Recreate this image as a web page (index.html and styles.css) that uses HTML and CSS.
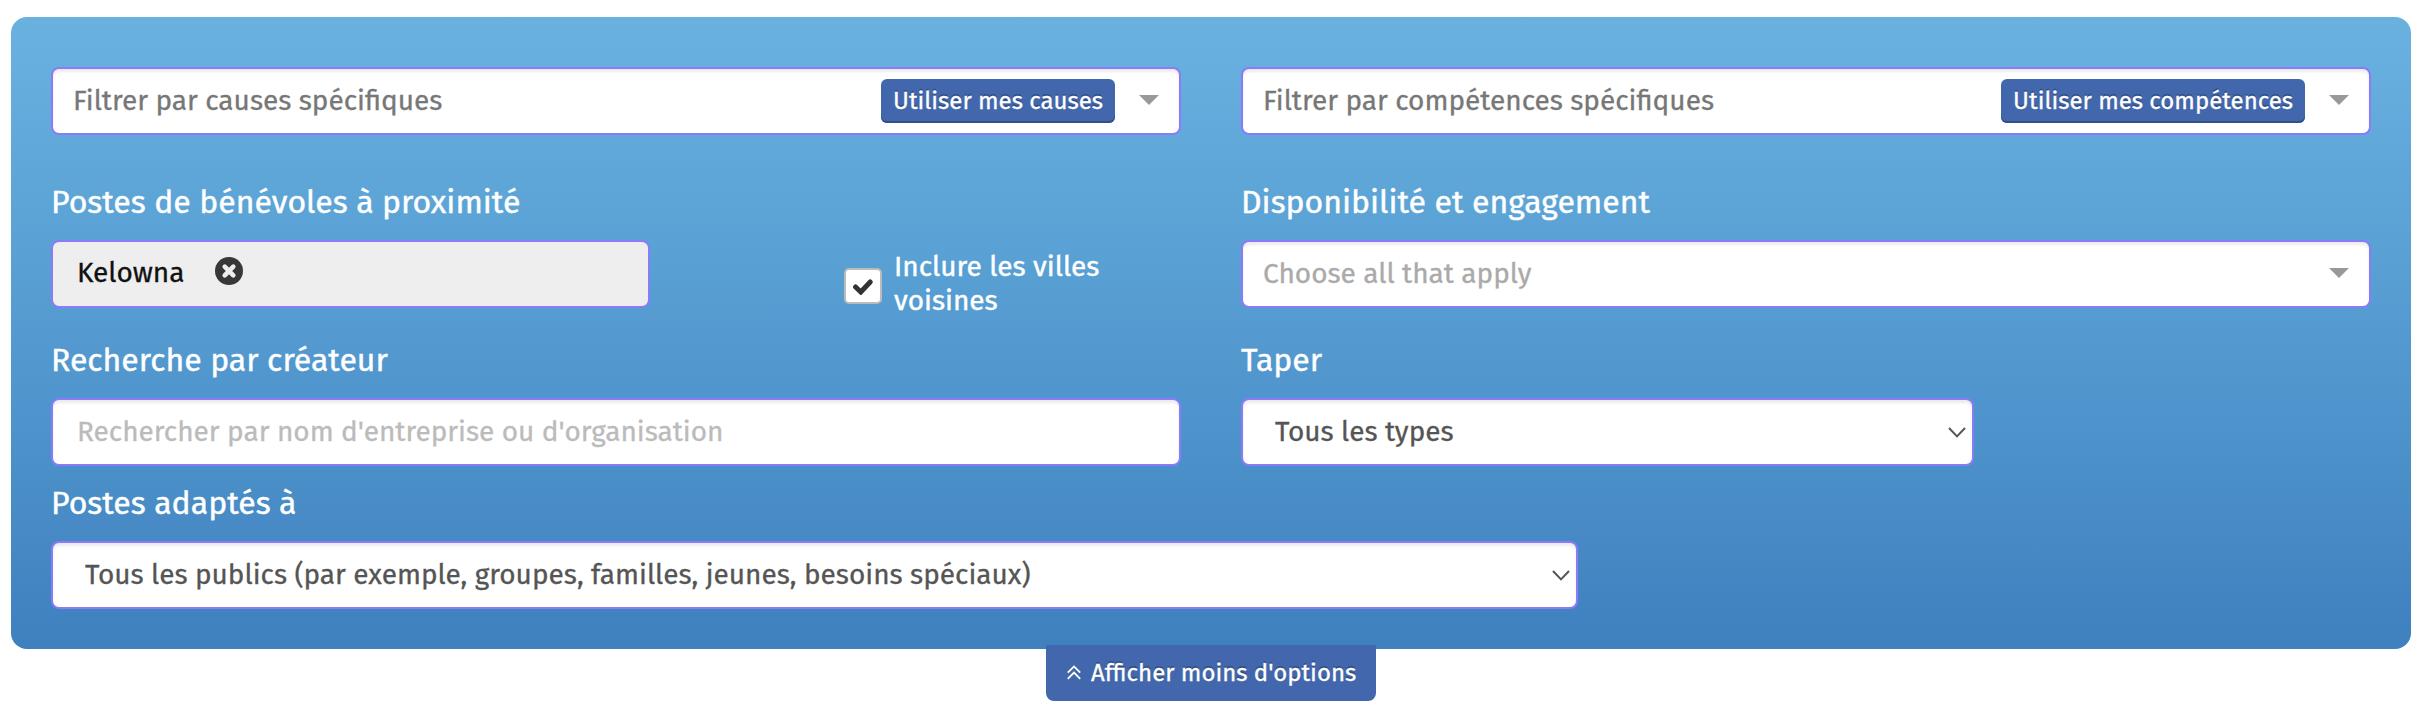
FILE: index.html
```html
<!DOCTYPE html>
<html lang="fr">
<head>
<meta charset="utf-8">
<title>Filtres</title>
<link rel="stylesheet" href="styles.css">
</head>
<body>
<main class="panel">
  <section class="col">
    <div class="field">
      <span class="value hint">Filtrer par causes spécifiques</span>
      <button class="use">Utiliser mes causes</button>
      <svg class="caret" viewBox="0 0 20 10"><path d="M0 0H20L10 10Z"/></svg>
    </div>
    <h2 class="label first">Postes de bénévoles à proximité</h2>
    <div class="row">
      <div class="field city">
        <span class="value town">Kelowna</span>
        <svg class="clear" viewBox="0 0 28 28"><circle cx="14" cy="14" r="14"/><path d="M9.7 9.7L18.3 18.3M18.3 9.7L9.7 18.3"/></svg>
      </div>
      <div class="nearby">
        <span class="box"><svg class="tick" viewBox="0 0 20 16"><path d="M2.6 8L7.8 13L17.2 3"/></svg></span>
        <span class="nearby-text">Inclure les villes<br>voisines</span>
      </div>
    </div>
    <h2 class="label">Recherche par créateur</h2>
    <div class="field pad"><span class="value faint">Rechercher par nom d'entreprise ou d'organisation</span></div>
  </section>
  <section class="col">
    <div class="field">
      <span class="value hint">Filtrer par compétences spécifiques</span>
      <button class="use">Utiliser mes compétences</button>
      <svg class="caret" viewBox="0 0 20 10"><path d="M0 0H20L10 10Z"/></svg>
    </div>
    <h2 class="label first">Disponibilité et engagement</h2>
    <div class="field">
      <span class="value pick">Choose all that apply</span>
      <svg class="caret" viewBox="0 0 20 10"><path d="M0 0H20L10 10Z"/></svg>
    </div>
    <h2 class="label">Taper</h2>
    <div class="field select type">
      <span class="value">Tous les types</span>
      <svg class="chevron" viewBox="0 0 18 11"><path d="M1 1L9 9.4L17 1"/></svg>
    </div>
  </section>
  <section class="audience">
    <h2 class="label last">Postes adaptés à</h2>
    <div class="field select">
      <span class="value">Tous les publics (par exemple, groupes, familles, jeunes, besoins spéciaux)</span>
      <svg class="chevron" viewBox="0 0 18 11"><path d="M1 1L9 9.4L17 1"/></svg>
    </div>
  </section>
</main>
<button class="toggle">
  <svg class="up" viewBox="0 0 14 15"><path d="M.8 7.6L7 1.4L13.2 7.6M.8 13.8L7 7.6L13.2 13.8"/></svg>
  <span>Afficher moins d'options</span>
</button>
</body>
</html>
```
FILE: styles.css
```css
* { box-sizing: border-box; }

body {
  margin: 0;
  padding: 17px 7px 0 11px;
  background: #fff;
  font-family: "Fira Sans", "Noto Sans", sans-serif;
}

.panel {
  display: grid;
  grid-template-columns: 1130px 1130px;
  column-gap: 60px;
  align-content: start;
  height: 632px;
  padding: 50px 40px 0;
  border-radius: 16px;
  background: linear-gradient(#69b2e0, #5298cf 55%, #3f80be);
}

.field {
  display: flex;
  align-items: center;
  height: 68px;
  padding: 0 20px;
  border: 2px solid #8a7bf8;
  border-radius: 8px;
  background: #fff;
  box-shadow: inset 0 3px 3px rgba(0, 0, 0, .08);
}

.value {
  margin-right: auto;
  font-size: 28px;
  line-height: 38px;
  color: #555;
  -webkit-text-stroke: .3px;
  white-space: nowrap;
}
.hint { color: #777; }
.pick { color: #aaa; }
.faint { color: #bbb; }
.pad { padding-left: 24px; }

.use {
  height: 44px;
  margin: 0 24px 0 0;
  padding: 0 12px;
  border: 0;
  border-radius: 6px;
  background: #4267ac;
  box-shadow: inset 0 -2px 0 #344f86;
  color: #fff;
  font-family: inherit;
  font-size: 24px;
  line-height: 44px;
  -webkit-text-stroke: .3px;
  text-shadow: 0 -2px 0 rgba(0, 0, 0, .25);
  white-space: nowrap;
}

.caret { width: 20px; height: 10px; margin-bottom: 2px; fill: #999; }

.label {
  margin: 30px 0 16px;
  font-size: 32px;
  font-weight: 400;
  line-height: 44px;
  color: #fff;
  -webkit-text-stroke: .4px;
}
.first { margin-top: 45px; }
.last { margin-top: 15px; }

.row { display: flex; height: 68px; }

.city {
  width: 599px;
  padding-left: 24px;
  background: #eee;
  box-shadow: none;
}
.town { margin-right: 30px; padding-bottom: 2px; color: #111; }
.clear { width: 28px; height: 28px; margin-bottom: 7px; fill: #383838; }
.clear path { stroke: #eee; stroke-width: 4.6; stroke-linecap: round; }

.nearby { display: flex; margin-left: 194px; }
.box {
  display: flex;
  align-items: center;
  justify-content: center;
  width: 38px;
  height: 36px;
  margin-top: 28px;
  border: 2px solid #bbb;
  border-radius: 5px;
  background: #fff;
}
.tick { width: 20px; height: 16px; margin-top: 2px; }
.tick path { fill: none; stroke: #333; stroke-width: 5; stroke-linecap: round; }
.nearby-text {
  margin: 10px 0 0 12px;
  font-size: 28px;
  line-height: 34px;
  color: #fff;
  -webkit-text-stroke: .4px;
  white-space: nowrap;
}

.select { padding: 0 6px 0 32px; }
.type { width: 733px; }
.audience { grid-column: 1 / -1; width: 1527px; }
.chevron { width: 18px; height: 11px; margin-top: 1px; }
.chevron path { fill: none; stroke: #555; stroke-width: 2; }

.toggle {
  display: flex;
  align-items: center;
  gap: 10px;
  width: 330px;
  height: 56px;
  margin: -4px 0 0 1035px;
  padding: 0 0 1px 21px;
  border: 0;
  border-radius: 0 0 8px 8px;
  background: #4267ac;
  color: #fff;
  font-family: inherit;
  font-size: 24px;
  line-height: 32px;
  -webkit-text-stroke: .3px;
  text-shadow: 0 -2px 0 rgba(0, 0, 0, .25);
  white-space: nowrap;
}
.up { width: 14px; height: 15px; }
.up path { fill: none; stroke: #fff; stroke-width: 1.8; }
```
